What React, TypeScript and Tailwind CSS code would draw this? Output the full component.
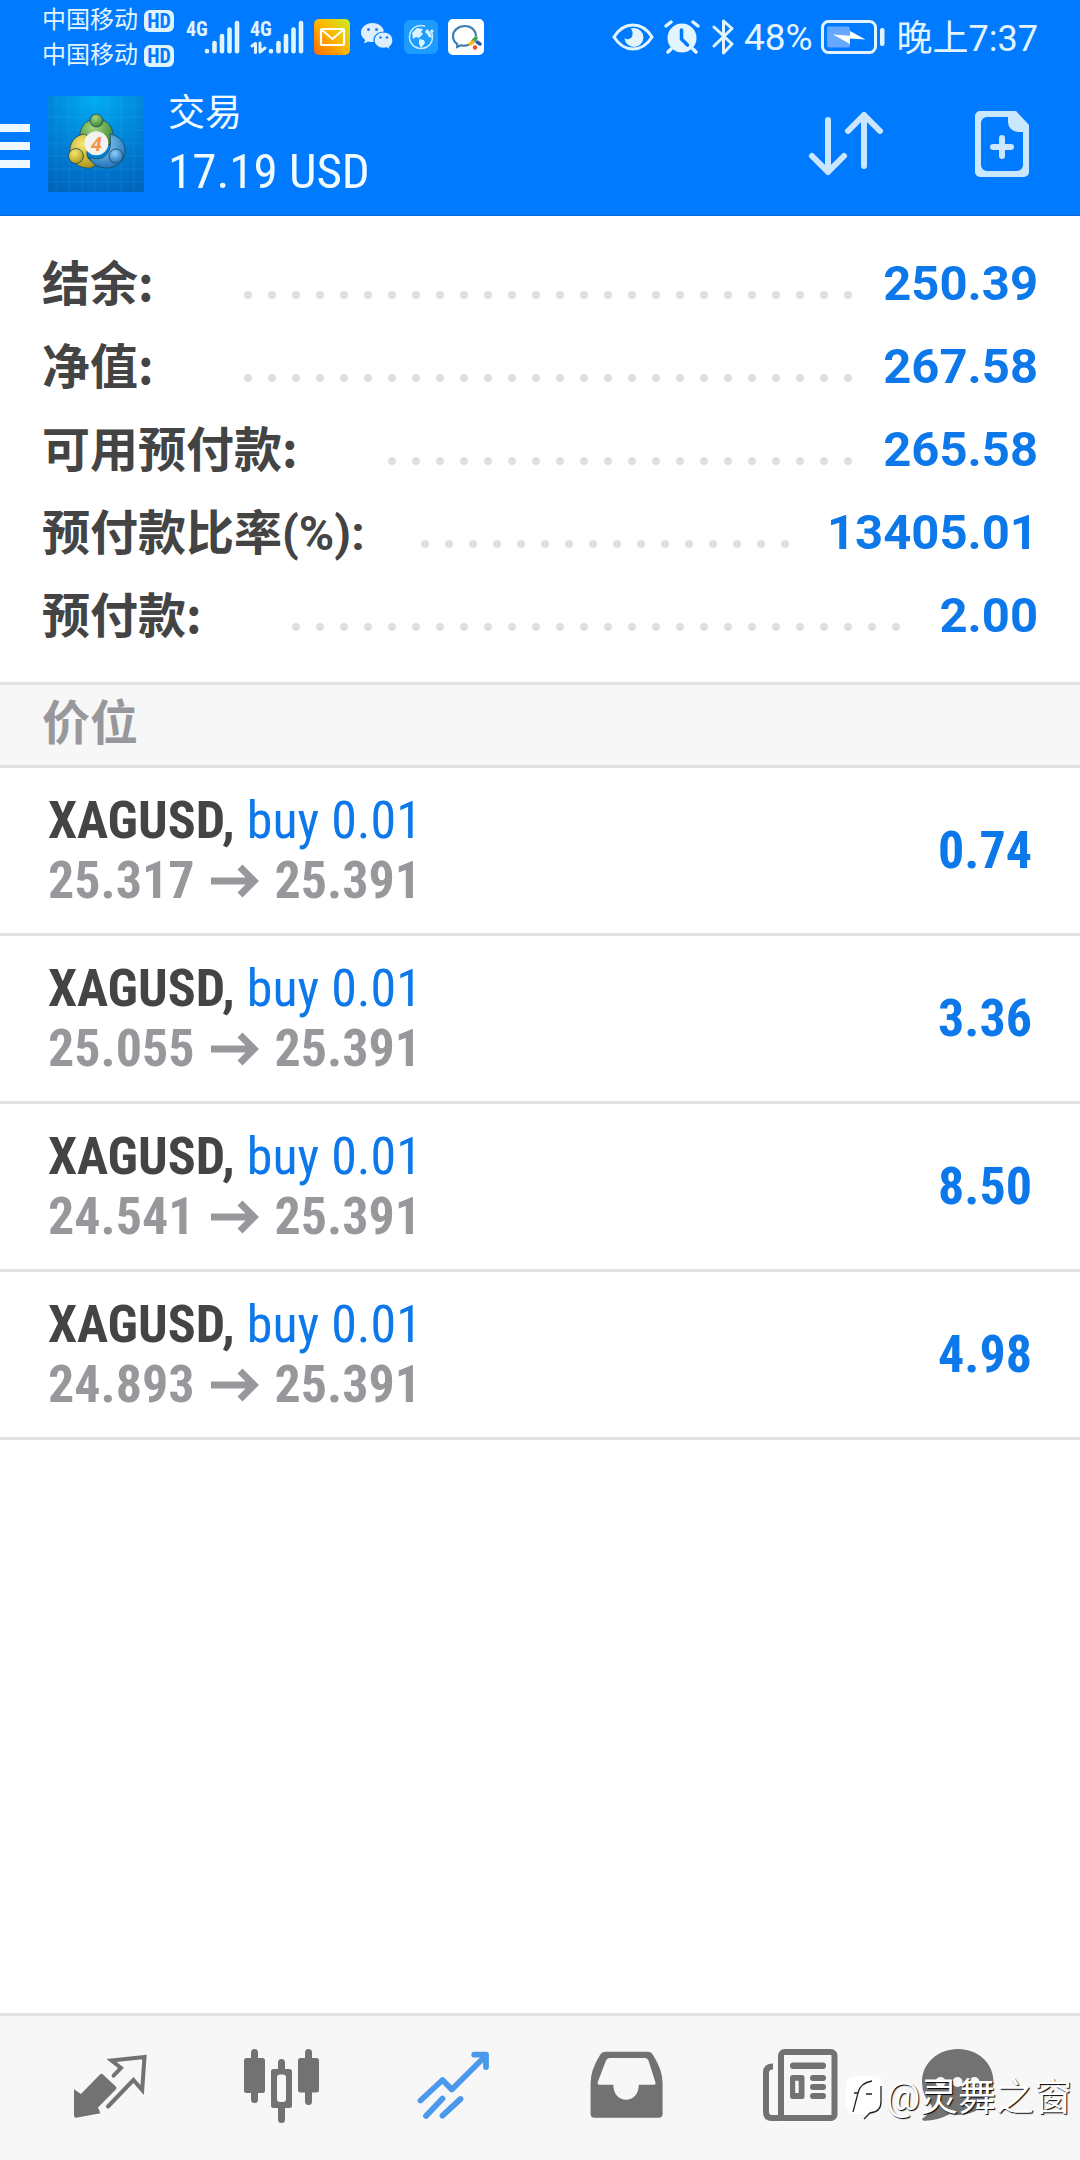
import React from "react";

const summary = [
  { label: "结余:", suffix: "", value: "250.39", gap: "ml-[82px]" },
  { label: "净值:", suffix: "", value: "267.58", gap: "ml-[82px]" },
  { label: "可用预付款:", suffix: "", value: "265.58", gap: "ml-[82px]" },
  { label: "预付款比率", suffix: "(%):", value: "13405.01", gap: "ml-12" },
  { label: "预付款:", suffix: "", value: "2.00", gap: "ml-[82px]" },
];

const positions = [
  { symbol: "XAGUSD", side: "buy 0.01", open: "25.317", current: "25.391", profit: "0.74" },
  { symbol: "XAGUSD", side: "buy 0.01", open: "25.055", current: "25.391", profit: "3.36" },
  { symbol: "XAGUSD", side: "buy 0.01", open: "24.541", current: "25.391", profit: "8.50" },
  { symbol: "XAGUSD", side: "buy 0.01", open: "24.893", current: "25.391", profit: "4.98" },
];

const leaderDots = Array.from({ length: 40 });

const Carrier = () => (
  <div className="flex items-center gap-1.5">
    <span className="text-[24px] leading-[35px]">中国移动</span>
    <span className="flex h-[22px] w-[30px] items-center justify-center rounded-md bg-[#dff3ff] font-['Roboto_Condensed','Roboto',sans-serif] text-[20px] leading-none font-bold text-[#007aff]">
      HD
    </span>
  </div>
);

const Signal = ({ data }: { data?: boolean }) => (
  <div className="relative h-[34px] w-[54px]">
    <span className="absolute top-0 left-0 font-['Roboto_Condensed','Roboto',sans-serif] text-[20px] leading-[18px] font-bold">4G</span>
    <svg viewBox="0 0 54 34" className="h-full w-full" fill="none" stroke="currentColor" strokeLinecap="round">
      <g strokeWidth="4.6">
        <path d="M21 31v.2M28.500 23v8.200M36 16v15.200M43.500 9.500v21.700M51 3v28.200" />
      </g>
      {data && <path d="M2 26l3.500-2.500v9M10 23v9l5-4" strokeWidth="3" strokeLinejoin="round" />}
    </svg>
  </div>
);

const StatusBar = () => (
  <div className="flex h-[75px] items-start justify-between pr-[42px] pl-[42px] text-[#e2f5ff]">
    <div className="flex items-start gap-3">
      <div className="flex flex-col pt-[3px]">
        <Carrier />
        <Carrier />
      </div>
      <div className="flex h-[74px] items-center gap-2.5">
        <Signal />
        <Signal data />
        <svg viewBox="0 0 36 36" className="size-9">
          <defs>
            <linearGradient id="mail" x1="0" y1="1" x2="1" y2="0">
              <stop offset="0" stopColor="#ff6a00" />
              <stop offset=".5" stopColor="#ffb400" />
              <stop offset="1" stopColor="#c8ee20" />
            </linearGradient>
          </defs>
          <rect width="36" height="36" rx="5" fill="url(#mail)" />
          <rect x="7" y="10" width="23" height="16" rx="1" fill="none" stroke="#fff" strokeWidth="2.200" />
          <path d="M8 11l10.500 9L29 11" fill="none" stroke="#fff" strokeWidth="2" />
        </svg>
        <svg viewBox="0 0 34 30" className="h-[30px] w-[34px]">
          <path d="M12.500 1C5.900 1 1 5.300 1 10.600c0 3 1.600 5.600 4.100 7.300L4 21.500l4.200-2.100c1.400.4 2.800.6 4.300.6C18.600 20 24 15.900 24 10.600S19.100 1 12.500 1z" fill="#dcefff" />
          <circle cx="8.500" cy="7.500" r="1.500" fill="#2a7be0" />
          <circle cx="16.500" cy="7.500" r="1.500" fill="#2a7be0" />
          <path d="M23.500 10C17.900 10 14 13.600 14 18.200s3.900 8.200 9.500 8.200c1.200 0 2.300-.2 3.400-.5l3.600 2.300-.9-3.300c2.100-1.600 3.400-4 3.400-6.700 0-4.600-3.900-8.200-9.500-8.200z" fill="#dcefff" stroke="#007aff" strokeWidth="1.200" />
          <circle cx="20.500" cy="15.500" r="1.300" fill="#2a7be0" />
          <circle cx="27" cy="15.500" r="1.300" fill="#2a7be0" />
        </svg>
        <svg viewBox="0 0 34 34" className="size-[34px]">
          <rect width="34" height="34" rx="6" fill="#1e9bff" />
          <circle cx="17" cy="17" r="11.500" fill="none" stroke="#c5ecff" strokeWidth="1.500" strokeDasharray="58 8" />
          <path d="M8 13l5-5 6 1-2 3 2 2-4 4-3-1-3 2zM15 19l5 1 1 3-4 5-2-4zM23 9l3 3 2 6-3-1-2-3-2-2z" fill="#d8f4ff" />
          <circle cx="28" cy="11" r="1.600" fill="#d8f4ff" />
        </svg>
        <svg viewBox="0 0 36 36" className="size-9">
          <rect width="36" height="36" rx="5" fill="#fff" />
          <path d="M28 17.500C28 11.500 23.500 7 17 7S5 11.500 5 17.200c0 3.200 1.500 6 4.200 7.800v3l3.500-1.700c3 .8 6 .5 8.500-.7" fill="none" stroke="#3d7fb5" strokeWidth="2.200" />
          <path d="M25 22l3-3" stroke="#3aa757" strokeWidth="3.500" strokeLinecap="round" />
          <path d="M22 25l3-2" stroke="#f9b81a" strokeWidth="3.500" strokeLinecap="round" />
          <path d="M29 23l3 2" stroke="#2d5fa8" strokeWidth="3.500" strokeLinecap="round" />
          <circle cx="27" cy="28.500" r="2.200" fill="#ee4b2b" />
        </svg>
      </div>
    </div>

    <div className="flex h-[74px] items-center">
      <svg viewBox="0 0 42 28" className="mr-2.5 h-7 w-[42px]">
        <path d="M2 14C7 6 13.500 2 21 2s14 4 19 12c-5 8-11.500 12-19 12S7 22 2 14z" fill="none" stroke="currentColor" strokeWidth="3" />
        <path d="M22 5a9.500 9.500 0 1 1-9.500 10c2 2 6 1.500 7.500-1.500 1.300-3 .5-6.500-1.500-8z" fill="currentColor" />
      </svg>
      <svg viewBox="0 0 36 34" className="mr-3 h-[34px] w-9">
        <circle cx="18" cy="18" r="14.500" fill="currentColor" />
        <path d="M2 6l5-4M34 6l-5-4M7 29l-3 3M29 29l3 3" stroke="currentColor" strokeWidth="3.500" strokeLinecap="round" />
        <path d="M17.500 10v9l6 6" fill="none" stroke="#007aff" strokeWidth="3.500" strokeLinecap="round" />
      </svg>
      <svg viewBox="0 0 22 38" className="mr-2.5 h-[38px] w-[22px]" fill="none" stroke="currentColor" strokeWidth="3" strokeLinejoin="round" strokeLinecap="round">
        <path d="M2 9l18 17-8.500 9V3L20 10.500 2 28" />
      </svg>
      <span className="text-[37px] leading-none">48%</span>
      <svg viewBox="0 0 64 34" className="mr-3 ml-2 h-[34px] w-16">
        <rect x="1.500" y="1.500" width="53" height="31" rx="6" fill="none" stroke="currentColor" strokeWidth="3" />
        <rect x="6" y="6.500" width="23" height="21" rx="2" fill="#67a8ff" />
        <path d="M12 14.500l17 1.200V11l15.500 8.500-15.500-1V24z" fill="#fff" />
        <rect x="59" y="8" width="4.500" height="18" rx="2" fill="currentColor" />
      </svg>
      <span className="pt-1 text-[36px] leading-none">晚上7:37</span>
    </div>
  </div>
);

const AppLogo = () => (
  <svg viewBox="0 0 96 96" className="size-24">
    <defs>
      <radialGradient id="sky" cx=".5" cy="0" r="1.050">
        <stop offset="0" stopColor="#00aef5" />
        <stop offset=".5" stopColor="#0084d8" />
        <stop offset="1" stopColor="#0065bd" />
      </radialGradient>
      <radialGradient id="green" cx=".4" cy=".3" r=".8">
        <stop offset="0" stopColor="#a5d67b" />
        <stop offset="1" stopColor="#2c7a2e" />
      </radialGradient>
      <radialGradient id="gold" cx=".4" cy=".3" r=".8">
        <stop offset="0" stopColor="#f6e670" />
        <stop offset="1" stopColor="#a8900f" />
      </radialGradient>
      <radialGradient id="blue" cx=".4" cy=".3" r=".8">
        <stop offset="0" stopColor="#8fd0f7" />
        <stop offset="1" stopColor="#1268b4" />
      </radialGradient>
    </defs>
    <rect width="96" height="96" fill="url(#sky)" />
    <path d="M8 0v96M21 0v96M34 0v96M47 0v96M60 0v96M73 0v96M86 0v96M0 8h96M0 21h96M0 34h96M0 47h96M0 60h96M0 73h96M0 86h96" stroke="#4cc0ff" strokeOpacity=".15" />
    <g stroke="#1c4a5c" strokeWidth=".8">
      <path d="M32 46c-2-15 6-23 16.500-23S67 31 65 46l-9 6c-1-8-3-12-8-12s-9 3-10 9z" fill="url(#green)" />
      <path d="M37 38c-11 1-16 10-15 19s9 16 21 15l8-5c-9-1-13-5-12-11s4-8 8-9z" fill="url(#gold)" />
      <path d="M62 38c10 2 16 10 15 19s-10 16-20 15-14-6-16-11c8 3 14 2 18-3s4-11 3-20z" fill="url(#blue)" />
      <circle cx="48.500" cy="24.500" r="6.500" fill="url(#green)" />
      <circle cx="28" cy="60" r="7.500" fill="url(#gold)" />
      <circle cx="68" cy="60" r="7" fill="url(#blue)" />
    </g>
    <circle cx="48.300" cy="47.300" r="12" fill="#f4f2ee" />
    <text x="48.300" y="54.500" textAnchor="middle" fontSize="20" fontWeight="bold" fontStyle="italic" fontFamily="Roboto, sans-serif" fill="#f0954a">4</text>
  </svg>
);

const TopBar = () => (
  <div className="flex h-[141px] items-center border-b border-[#0b66d4] pr-12 pb-0.5">
    <button aria-label="菜单" className="flex w-[30px] flex-col gap-2.5 pt-1">
      <span className="h-2 bg-[#eef9ff]" />
      <span className="h-2 bg-[#eef9ff]" />
      <span className="h-2 bg-[#eef9ff]" />
    </button>
    <div className="mr-6 ml-[18px]">
      <AppLogo />
    </div>
    <div className="flex-1 text-[#f0faff]">
      <h1 className="text-[37px] leading-[56px]">交易</h1>
      <p className="font-['Roboto_Condensed','Roboto',sans-serif] text-[49px] leading-[60px]">17.19 USD</p>
    </div>
    <button aria-label="排序" className="mr-[88px]">
      <svg viewBox="0 0 76 68" className="h-[68px] w-[76px]" fill="none" stroke="#cbe7ff" strokeWidth="6" strokeLinecap="round" strokeLinejoin="round">
        <path d="M20 10v52M4 46l16 16 16-16M56 56V5M40 21L56 5l16 16" />
      </svg>
    </button>
    <button aria-label="新订单">
      <svg viewBox="0 0 60 68" className="h-[68px] w-[60px]" fill="#cbe7ff">
        <path fillRule="evenodd" d="M8 1h36l13 14v47a5 5 0 0 1-5 5H8a5 5 0 0 1-5-5V6a5 5 0 0 1 5-5zm7 6a6 6 0 0 0-6 6v42a6 6 0 0 0 6 6h30a6 6 0 0 0 6-6V22h-5A10 10 0 0 1 36 12V7z" />
        <path d="M30 28v18M21 37h18" stroke="#cbe7ff" strokeWidth="6" strokeLinecap="round" />
      </svg>
    </button>
  </div>
);

const tabs = [
  {
    name: "行情",
    color: "text-[#727272]",
    icon: (
      <>
        <path d="M4 41.300l6.900 4.700L29 27.500q2-3 4-1l12.800 12q1.500 1.500 0 3L28 59.500l2.500 5.800L6 69.700q-2 0-2-2z" fill="currentColor" />
        <path d="M43.600 27.700L51 20l-9.500-7.500 33-3.500-2.300 33-8.800-10L38 58.500" fill="none" stroke="currentColor" strokeWidth="4" strokeLinecap="round" />
      </>
    ),
  },
  {
    name: "图表",
    color: "text-[#727272]",
    icon: (
      <g fill="currentColor">
        <rect x="9" y="1" width="7" height="54" rx="3.500" />
        <rect x="2" y="10" width="21" height="35" rx="2.500" />
        <rect x="63" y="1" width="7" height="56" rx="3.500" />
        <rect x="56" y="10" width="21" height="34.500" rx="2.500" />
        <rect x="36" y="11" width="7" height="64" rx="3.500" />
        <rect x="29" y="21" width="21" height="39" rx="2.500" />
        <rect x="35" y="26.500" width="9" height="27.500" rx="3" fill="#f7f7f7" />
      </g>
    ),
  },
  {
    name: "交易",
    color: "text-[#4a99ed]",
    icon: (
      <path
        d="M6.500 52.500l22-20.500 9.300 9.500L71 8.500M60.200 6.700H72V19M12 68l16.500-17.500M28.500 67.700L46.500 51"
        fill="none"
        stroke="currentColor"
        strokeWidth="5.800"
        strokeLinecap="round"
        strokeLinejoin="round"
      />
    ),
  },
  {
    name: "历史",
    color: "text-[#727272]",
    icon: (
      <path
        fillRule="evenodd"
        fill="currentColor"
        d="M20 3.700h42q3 0 5 3.300 9.600 15 9.600 28v31q0 3.700-3.700 3.700H8.300q-3.700 0-3.700-3.700V35q0-13 9.400-28 2-3.300 6-3.300zM23.500 10Q21 10 20 12.500L11.700 34.300q-.7 2.400 1.800 2.400h13.800c0 20 25.500 20 25.500 0h14.900q2.400 0 1.700-2.400L62.500 12.500Q61.500 10 59 10z"
      />
    ),
  },
  {
    name: "新闻",
    color: "text-[#727272]",
    icon: (
      <>
        <path d="M15 18.500q-7 0-7 6V64q0 6 6 6h11" fill="none" stroke="currentColor" strokeWidth="6" />
        <rect x="23" y="4" width="53.500" height="66" rx="3.500" fill="none" stroke="currentColor" strokeWidth="6" />
        <g fill="currentColor">
          <rect x="32" y="14.500" width="36" height="6.500" rx="3" />
          <path fillRule="evenodd" d="M35 27h9q2.500 0 2.500 2.500v19q0 2.500-2.500 2.500h-9q-3 0-3-2.500v-19q0-2.500 3-2.500zm2.200 5.700V45h3.500V32.700z" />
          <rect x="52" y="27" width="16" height="6" rx="3" />
          <rect x="52" y="36" width="16" height="6" rx="3" />
          <rect x="52" y="45" width="16" height="6" rx="3" />
        </g>
      </>
    ),
  },
  {
    name: "消息",
    color: "pr-6 text-[#727272]",
    icon: (
      <>
        <path d="M40 1c20 0 35.500 14 35.500 33S60 67 40 67q-4 0-8-1-13 7-26 6.700-3-.7-1-2.700 7-4 9-12Q4 48 4 34C4 15 20 1 40 1z" fill="currentColor" />
        <g fill="#f7f7f7">
          <circle cx="22.500" cy="34" r="5" />
          <circle cx="39.500" cy="34" r="5" />
          <circle cx="56.500" cy="34" r="5" />
        </g>
      </>
    ),
  },
];

const Watermark = () => (
  <div className="pointer-events-none absolute right-2 bottom-10 flex items-center gap-0.5 text-white">
    <svg viewBox="0 0 40 46" className="h-[46px] w-10">
      <path d="M12 2h18q8 0 8 9v17q0 10-12 12l-5 4v-4h-9Q2 40 2 30V12Q2 2 12 2z" fill="#fff" />
      <path d="M9 38l5-19h-4M14 19q2-10 14-12M22 20h6M37 12v16q0 10-11 11l-6 6" fill="none" stroke="#222" strokeWidth="1.300" />
    </svg>
    <span className="text-[38px] leading-[46px] [text-shadow:1px_1px_1px_#000]">@灵舞之窗</span>
  </div>
);

export default function App() {
  return (
    <div className="relative flex min-h-screen w-full flex-col bg-white font-['Roboto','Noto_Sans_CJK_SC',sans-serif]">
      <header className="bg-[#007aff]">
        <StatusBar />
        <TopBar />
      </header>

      <main className="flex-1">
        <dl className="flex flex-col px-[42px] pt-[26px] pb-[25px]">
          {summary.map((row) => (
            <div key={row.label} className="flex h-[83px] items-center">
              <dt className="pb-0.5 text-[48px] leading-none font-bold text-[#444444]">
                <span className="font-['Noto_Sans_CJK_SC',sans-serif]">{row.label}</span>
                {row.suffix}
              </dt>
              <div aria-hidden="true" className={`mt-[22px] flex h-2 min-w-0 flex-1 flex-wrap overflow-hidden ${row.gap}`}>
                {leaderDots.map((_, i) => (
                  <span key={i} className="mx-2 size-2 rounded-full bg-[#e0e0e0]" />
                ))}
              </div>
              <dd className="ml-4 text-[49px] leading-none font-bold text-[#0c78ea]">{row.value}</dd>
            </div>
          ))}
        </dl>

        <h2 className="flex h-[86px] items-center border-y-3 border-[#e1e1e1] bg-[#f7f7f7] px-[42px] pb-3 font-['Noto_Sans_CJK_SC',sans-serif] text-[48px] leading-none font-bold text-[#98989c]">
          价位
        </h2>

        <ul className="font-['Roboto_Condensed','Roboto',sans-serif] text-[52px]">
          {positions.map((p) => (
            <li key={p.open} className="flex h-[168px] items-center justify-between border-b-3 border-[#e1e1e1] px-12">
              <div className="leading-[60px]">
                <p className="text-[#0c78ea]">
                  <strong className="font-bold text-[#444444]">{p.symbol},</strong> {p.side}
                </p>
                <p className="flex items-center font-bold text-[#98989c]">
                  {p.open}
                  <svg viewBox="0 0 48 34" className="mx-4 h-[34px] w-12" fill="none" stroke="currentColor" strokeWidth="7">
                    <path d="M0 17h43M29 3l14 14-14 14" />
                  </svg>
                  {p.current}
                </p>
              </div>
              <span className="font-bold text-[#0c78ea]">{p.profit}</span>
            </li>
          ))}
        </ul>
      </main>

      <nav className="flex h-[147px] border-t-3 border-[#e1e1e1] bg-[#f7f7f7] px-6">
        {tabs.map((tab) => (
          <button key={tab.name} aria-label={tab.name} className={`flex w-1/6 items-center justify-center ${tab.color}`}>
            <svg viewBox="0 0 80 80" className="size-20 shrink-0">
              {tab.icon}
            </svg>
          </button>
        ))}
      </nav>
      <Watermark />
    </div>
  );
}
